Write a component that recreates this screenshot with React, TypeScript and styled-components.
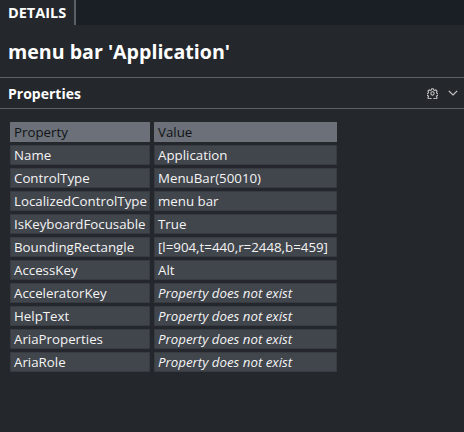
import { Fragment } from "react";
import styled, { createGlobalStyle } from "styled-components";

const GlobalStyle = createGlobalStyle`
  html, body {
    margin: 0;
    padding: 0;
    background-color: #24282c;
    color: #f2f2f2;
    font-family: "Open Sans", "Noto Sans", sans-serif;
  }
`;

type Row = { name: string; value: string; missing?: boolean };

const rows: Row[] = [
  { name: "Name", value: "Application" },
  { name: "ControlType", value: "MenuBar(50010)" },
  { name: "LocalizedControlType", value: "menu bar" },
  { name: "IsKeyboardFocusable", value: "True" },
  { name: "BoundingRectangle", value: "[l=904,t=440,r=2448,b=459]" },
  { name: "AccessKey", value: "Alt" },
  { name: "AcceleratorKey", value: "Property does not exist", missing: true },
  { name: "HelpText", value: "Property does not exist", missing: true },
  { name: "AriaProperties", value: "Property does not exist", missing: true },
  { name: "AriaRole", value: "Property does not exist", missing: true },
];

function GearIcon() {
  return (
    <svg width="11" height="11" viewBox="0 0 12 12">
      <path
        d="M5 0.8h2l0.3 1.4 1.2 0.5 1.2-0.8 1.4 1.4-0.8 1.2 0.5 1.2 1.4 0.3v2l-1.4 0.3-0.5 1.2 0.8 1.2-1.4 1.4-1.2-0.8-1.2 0.5-0.3 1.4h-2l-0.3-1.4-1.2-0.5-1.2 0.8-1.4-1.4 0.8-1.2-0.5-1.2-1.4-0.3v-2l1.4-0.3 0.5-1.2-0.8-1.2 1.4-1.4 1.2 0.8 1.2-0.5z"
        fill="none"
        stroke="#c8c8c8"
        strokeWidth="1.1"
        strokeLinejoin="round"
      />
      <circle cx="6" cy="6" r="1.8" fill="none" stroke="#c8c8c8" strokeWidth="1.1" />
    </svg>
  );
}

function ChevronIcon() {
  return (
    <svg width="10" height="6" viewBox="0 0 10 6">
      <path d="M0.8 0.8L5 5l4.2-4.2" fill="none" stroke="#c8c8c8" strokeWidth="1.2" />
    </svg>
  );
}

export default function App() {
  return (
    <>
      <GlobalStyle />
      <Page>
        <TabBar>
          <Tab>DETAILS</Tab>
        </TabBar>
        <Title>menu bar 'Application'</Title>
        <SectionHeader>
          <SectionTitle>Properties</SectionTitle>
          <Tools>
            <GearIcon />
            <ChevronIcon />
          </Tools>
        </SectionHeader>
        <Table>
          <HeadCell>Property</HeadCell>
          <HeadCell>Value</HeadCell>
          {rows.map((row) => (
            <Fragment key={row.name}>
              <Cell>{row.name}</Cell>
              <Cell $missing={row.missing}>{row.value}</Cell>
            </Fragment>
          ))}
        </Table>
      </Page>
    </>
  );
}

const Page = styled.div`
  width: 464px;
  height: 432px;
  background-color: #24282c;
  overflow: hidden;
`;

const TabBar = styled.div`
  display: flex;
  height: 25px;
  background-color: #1a1f25;
`;

const Tab = styled.div`
  display: flex;
  align-items: center;
  padding: 0 8px 0 8px;
  background-color: #24282c;
  border-right: 2px solid #5b6067;
  font-size: 14.5px;
  font-weight: 700;
  color: #ffffff;
`;

const Title = styled.div`
  height: 53px;
  padding-left: 8px;
  display: flex;
  align-items: center;
  font-size: 19.6px;
  font-weight: 700;
  color: #ffffff;
  border-bottom: 1px solid #5d6167;
  box-sizing: border-box;
`;

const SectionHeader = styled.div`
  display: flex;
  align-items: center;
  justify-content: space-between;
  height: 31px;
  padding: 0 6px 0 8px;
  border-bottom: 1px solid #5d6167;
  box-sizing: border-box;
`;

const SectionTitle = styled.div`
  font-size: 14px;
  font-weight: 700;
  color: #ffffff;
`;

const Tools = styled.div`
  display: flex;
  align-items: center;
  gap: 10px;
`;

const Table = styled.div`
  display: grid;
  grid-template-columns: 140px 183px;
  column-gap: 4px;
  row-gap: 3px;
  margin: 13px 0 0 10px;
`;

const HeadCell = styled.div`
  height: 20px;
  line-height: 20px;
  padding-left: 4px;
  background-color: #6b7079;
  color: #111316;
  font-size: 13.3px;
  white-space: nowrap;
`;

const Cell = styled.div<{ $missing?: boolean }>`
  height: 20px;
  line-height: 18px;
  padding-left: 3px;
  box-sizing: border-box;
  background-color: #41454c;
  border: 1px solid #383c42;
  color: #f4f4f4;
  font-size: 13.3px;
  font-style: ${(p) => (p.$missing ? "italic" : "normal")};
  white-space: nowrap;
  overflow: hidden;
`;
